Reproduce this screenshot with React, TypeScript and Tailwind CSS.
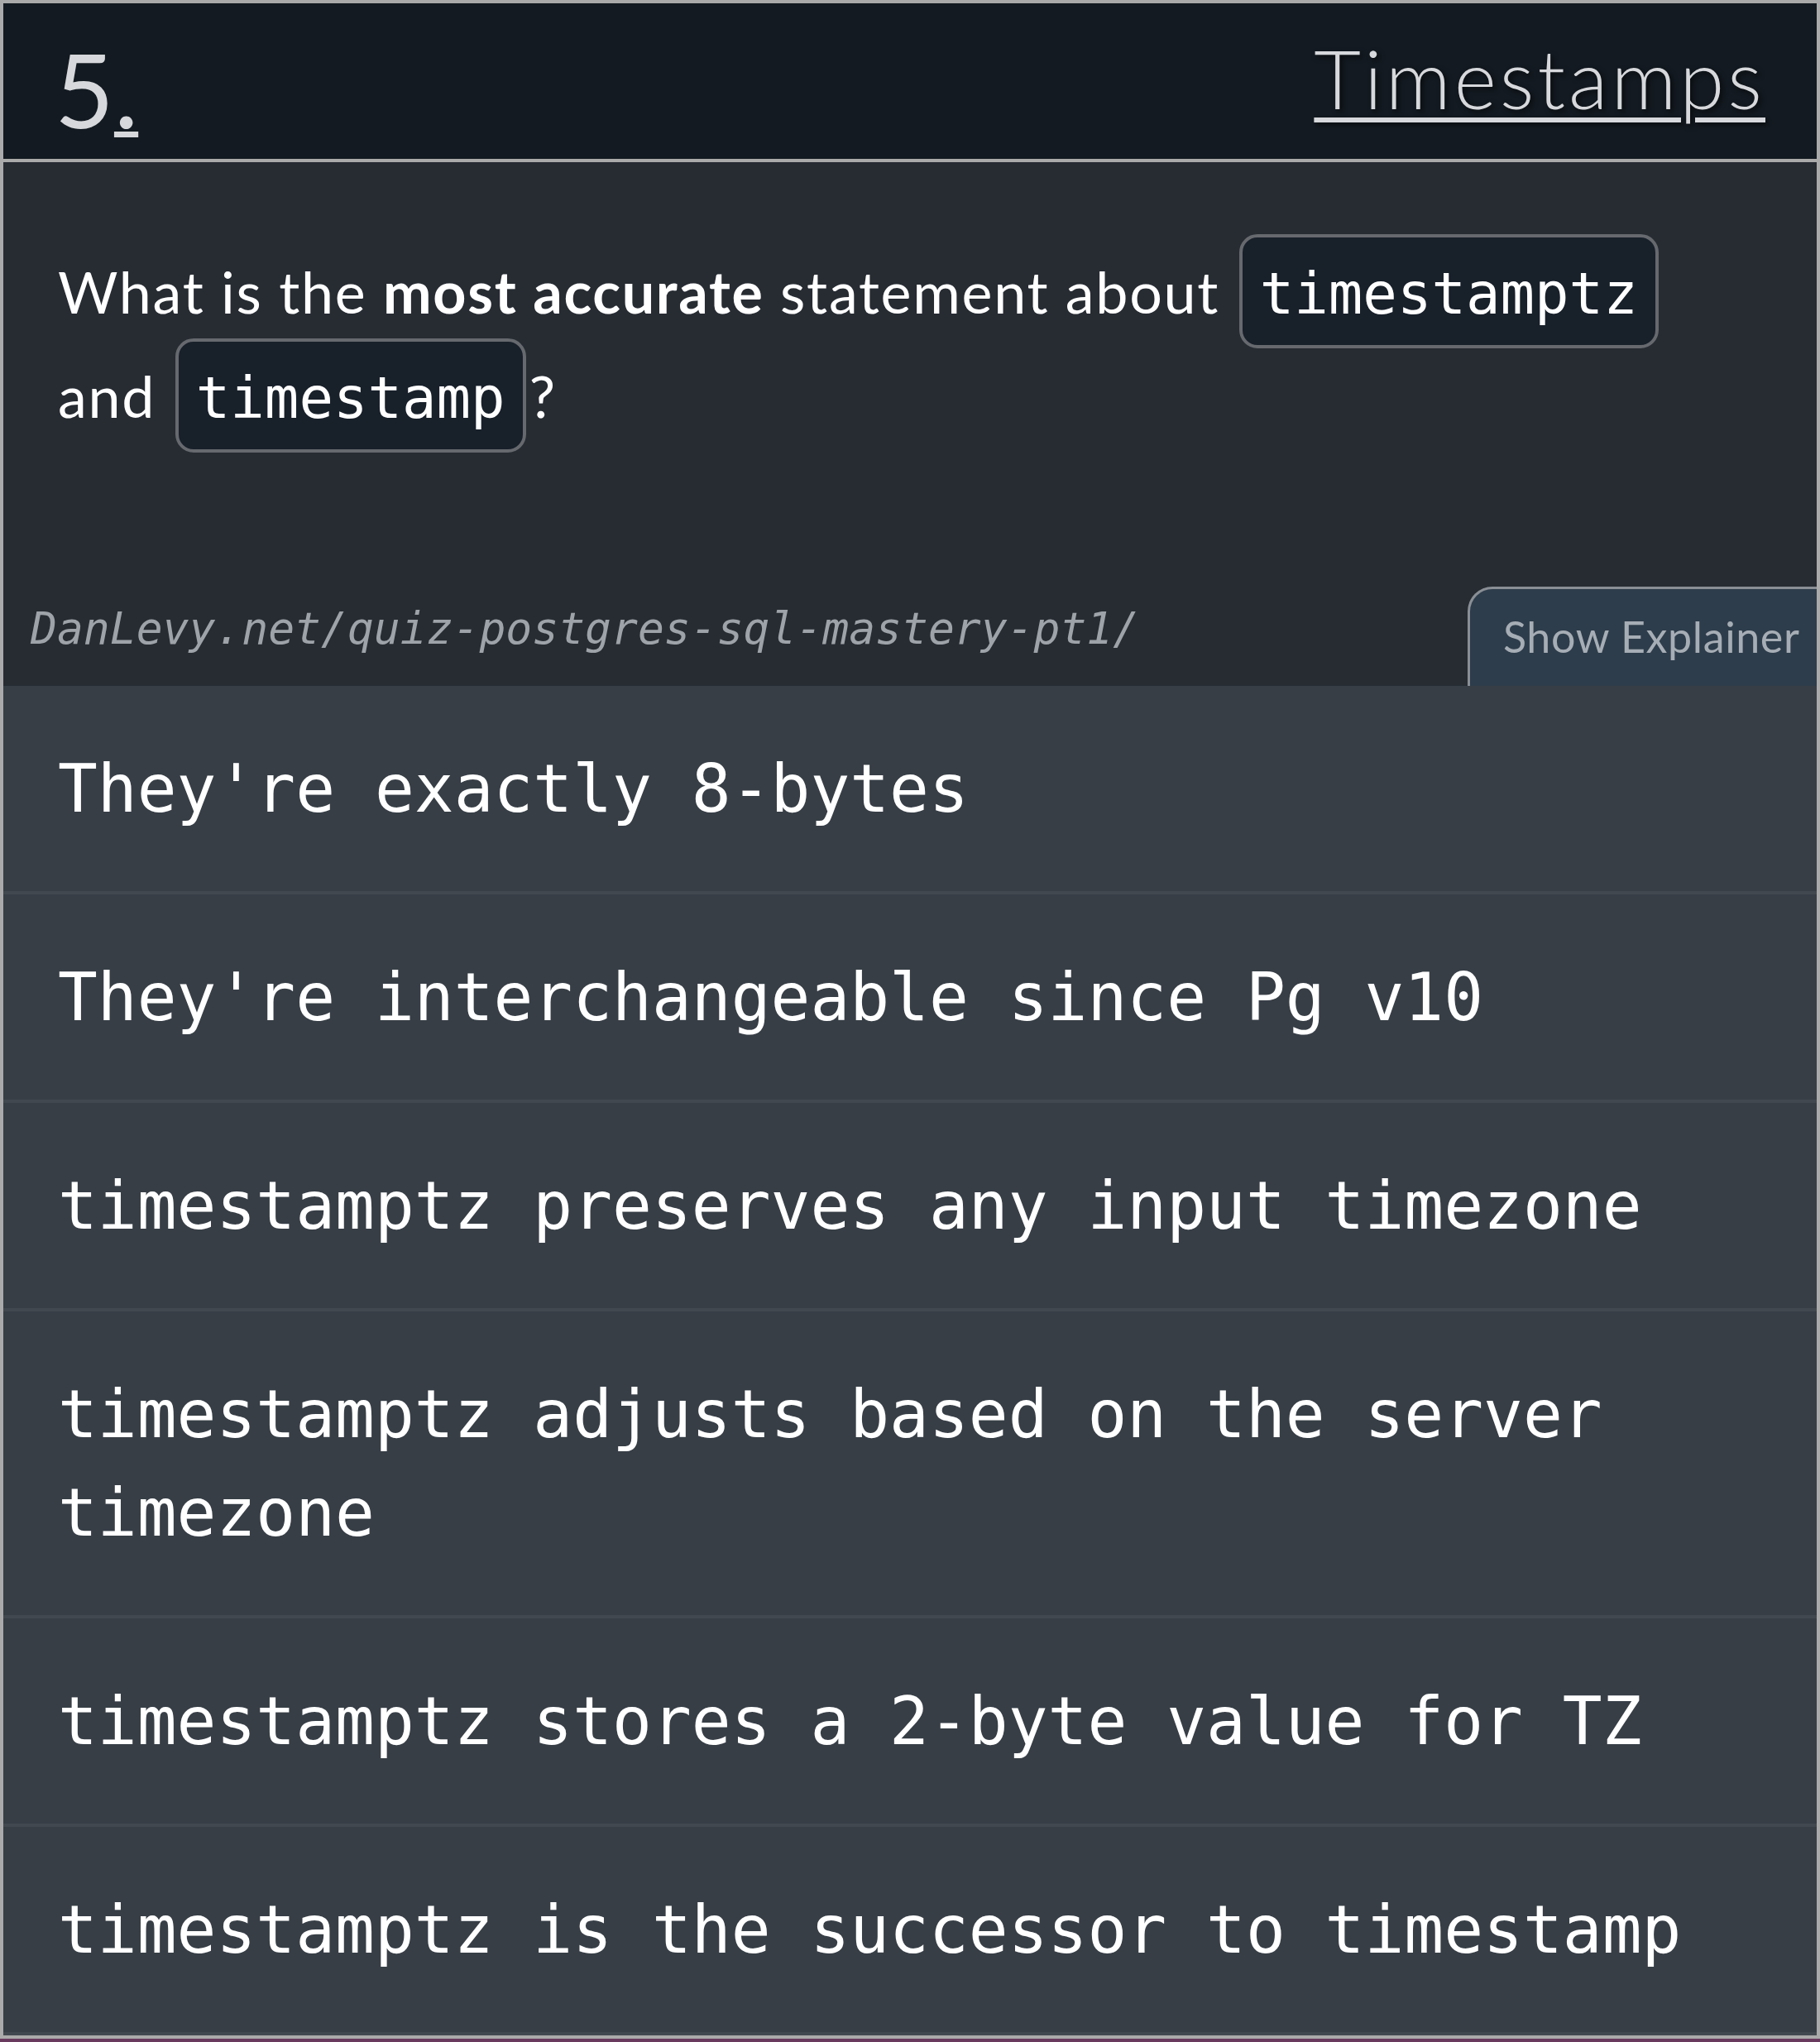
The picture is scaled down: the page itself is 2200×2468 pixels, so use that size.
const options = [
  "They're exactly 8-bytes",
  "They're interchangeable since Pg v10",
  "timestamptz preserves any input timezone",
  "timestamptz adjusts based on the server timezone",
  "timestamptz stores a 2-byte value for TZ",
  "timestamptz is the successor to timestamp",
];

// inline (no inline-block) para que el padding no agrande la linea
const Code = ({ children }: { children: string }) => (
  <code className="mx-[4px] rounded-[22px] border-4 border-[#66696e] bg-[#18202a] px-[21px] pt-[28px] pb-[22px] font-['DejaVu_Sans_Mono',monospace] text-[69px] leading-none tracking-normal text-white">
    {children}
  </code>
);

export default function App() {
  return (
    <div className="w-[2200px] bg-[#6a3a5e] pb-[5px]">
      <div className="border-4 border-[#aaaaaa] bg-[#272c33]">
        {/* header */}
        <header className="flex h-[192px] items-start justify-between border-b-4 border-[#aaaaaa] bg-[#131a21] px-[62px] pt-[41px] font-['Lato',sans-serif] text-[#d6d8db]">
          <span className="text-[124px] font-normal leading-none">
            5<span className="underline decoration-[7px] underline-offset-[4px]">.</span>
          </span>
          <a className="text-[98px] font-light leading-none tracking-[4px] underline decoration-[6px] underline-offset-[10px] [text-shadow:3px_3px_6px_rgba(0,0,0,0.6)]">
            Timestamps
          </a>
        </header>

        {/* pregunta */}
        <section className="pt-[93px]">
          <p className="pl-[66px] pr-[160px] font-['Lato',sans-serif] text-[70px] leading-[126px] tracking-[1.7px] text-white">
            What is the <b className="font-bold">most accurate</b> statement about <Code>timestamptz</Code> and <Code>timestamp</Code>?
          </p>
          <div className="mt-[168px] flex items-end justify-between">
            <span className="mb-[30px] pl-[33px] font-['DejaVu_Sans_Mono',monospace] text-[53px] italic leading-[78px] text-[#9ea3a9]">
              DanLevy.net/quiz-postgres-sql-mastery-pt1/
            </span>
            <button className="flex h-[120px] w-[422px] items-start rounded-tl-[30px] border-t-[3px] border-l-[3px] border-[#8a8f96] bg-[#2e3d4b] pl-[40px] pt-[31px] text-left font-['Lato',sans-serif] text-[52px] leading-none tracking-[0.6px] text-[#a6adb5]">
              Show Explainer
            </button>
          </div>
        </section>

        {/* opciones */}
        <ul>
          {options.map((opt) => (
            <li
              key={opt}
              className="border-b-4 border-[#41484f] bg-[#373e46] px-[66px] pt-[65px] pb-[64px] font-['DejaVu_Sans_Mono',monospace] text-[79.5px] leading-[119px] text-white"
            >
              {opt}
            </li>
          ))}
        </ul>
      </div>
    </div>
  );
}
